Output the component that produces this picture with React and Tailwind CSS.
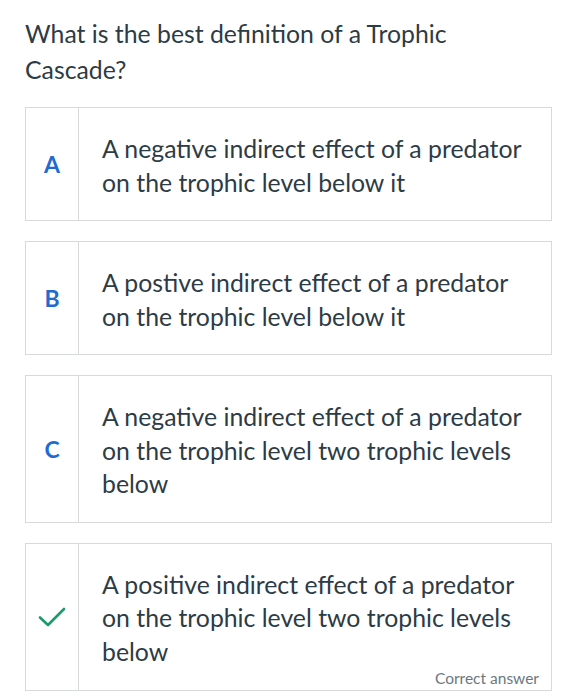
export default function App() {
  const opts = [
    { l: "A", t: "A negative indirect effect of a predator on the trophic level below it" },
    { l: "B", t: "A postive indirect effect of a predator on the trophic level below it" },
    { l: "C", t: "A negative indirect effect of a predator on the trophic level two trophic levels below" },
    { l: null, t: "A positive indirect effect of a predator on the trophic level two trophic levels below", correct: true },
  ];
  return (
    <div className="w-[579px] h-[700px] bg-white px-[25px] pt-[16px] text-[#2d3b45]" style={{ fontFamily: "Lato, 'Noto Sans', sans-serif" }}>
      <h1 className="text-[24.8px] leading-[36px] font-normal pr-[90px]">What is the best definition of a Trophic Cascade?</h1>
      <div className="mt-[19px] flex flex-col gap-[20px] w-[527px]">
        {opts.map((o, i) => (
          <div key={i} className="flex border border-[#d7dadd]">
            <div className="w-[53px] shrink-0 border-r border-[#d7dadd] flex items-center justify-center">
              {o.l ? (
                <span className="text-[#1f6bd1] text-[23px] font-bold">{o.l}</span>
              ) : (
                <svg width="28" height="20" viewBox="0 0 28 20" fill="none">
                  <path d="M2 10.5 L10 18 L26 2" stroke="#1a9c6a" strokeWidth="2.6" strokeLinecap="round" strokeLinejoin="round" />
                </svg>
              )}
            </div>
            <div className={"flex-1 pl-[23px] pr-[20px] " + (o.correct ? "pt-[24px] pb-[2px]" : "pt-[24px] pb-[21px]")}>
              <div className="text-[24.8px] leading-[33.5px]">{o.t}</div>
              {o.correct && (
                <div className="text-right text-[15.5px] leading-[20px] text-[#6b7780] -mr-[8px]">Correct answer</div>
              )}
            </div>
          </div>
        ))}
      </div>
    </div>
  );
}
